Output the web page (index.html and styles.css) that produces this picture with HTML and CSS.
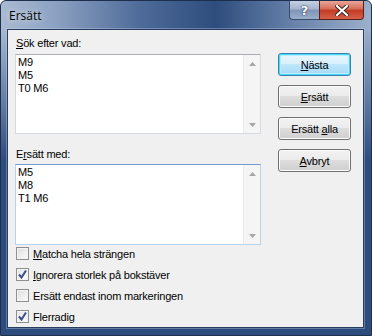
FILE: index.html
```html
<!DOCTYPE html>
<html lang="sv">
<head>
    <meta charset="UTF-8">
    <title>Ersätt</title>
    <link rel="stylesheet" href="styles.css">
</head>
<body>
    <div class="window">
        <div class="titlebar">
            <span class="title">Ersätt</span>
            <div class="caption-buttons">
                <div class="cap-btn help">?</div>
                <div class="cap-btn close">
                    <svg width="14" height="11" viewBox="0 0 14 11">
                        <path d="M2 1 L12 10 M12 1 L2 10" stroke="#3a2020" stroke-width="4" stroke-linecap="square"/>
                        <path d="M2 1 L12 10 M12 1 L2 10" stroke="#ffffff" stroke-width="2.2" stroke-linecap="square"/>
                    </svg>
                </div>
            </div>
        </div>

        <div class="client">
            <div class="fields">
                <div class="field-label"><u>S</u>ök efter vad:</div>
                <div class="textbox">
                    <div class="lines">M9<br>M5<br>T0 M6</div>
                    <div class="scrollbar">
                        <svg width="7" height="4" viewBox="0 0 7 4"><path d="M0 4 L3.5 0 L7 4 Z" fill="#a6a6a6"/></svg>
                        <svg width="7" height="4" viewBox="0 0 7 4"><path d="M0 0 L3.5 4 L7 0 Z" fill="#a6a6a6"/></svg>
                    </div>
                </div>

                <div class="field-label second">E<u>r</u>sätt med:</div>
                <div class="textbox focused">
                    <div class="lines">M5<br>M8<br>T1 M6</div>
                    <div class="scrollbar">
                        <svg width="7" height="4" viewBox="0 0 7 4"><path d="M0 4 L3.5 0 L7 4 Z" fill="#a6a6a6"/></svg>
                        <svg width="7" height="4" viewBox="0 0 7 4"><path d="M0 0 L3.5 4 L7 0 Z" fill="#a6a6a6"/></svg>
                    </div>
                </div>

                <div class="options">
                    <div class="option"><span class="checkbox"></span><span><u>M</u>atcha hela strängen</span></div>
                    <div class="option"><span class="checkbox checked"><svg width="11" height="11" viewBox="0 0 11 11"><path d="M2 5.5 L4.5 8.5 L9 1.5" stroke="#3b4f8f" stroke-width="2" fill="none"/></svg></span><span><u>I</u>gnorera storlek på bokstäver</span></div>
                    <div class="option"><span class="checkbox"></span><span>Ersätt endast inom markeringen</span></div>
                    <div class="option"><span class="checkbox checked"><svg width="11" height="11" viewBox="0 0 11 11"><path d="M2 5.5 L4.5 8.5 L9 1.5" stroke="#3b4f8f" stroke-width="2" fill="none"/></svg></span><span>Flerradig</span></div>
                </div>
            </div>

            <div class="actions">
                <button class="btn default"><u>N</u>ästa</button>
                <button class="btn"><u>E</u>rsätt</button>
                <button class="btn">Ersätt <u>a</u>lla</button>
                <button class="btn"><u>A</u>vbryt</button>
            </div>
        </div>
    </div>
</body>
</html>
```

FILE: styles.css
```css
body {
    margin: 0;
    padding: 0;
    background: #ffffff;
    font-family: "Liberation Sans", Arial, sans-serif;
    font-size: 11px;
    letter-spacing: -0.2px;
    color: #000;
}
.window {
    width: 372px;
    height: 336px;
    box-sizing: border-box;
    border: 1px solid #1e2f4d;
    border-radius: 6px 6px 0 0;
    background:
        linear-gradient(to bottom, rgba(45, 76, 126, 0) 28px, #2d4c7e 160px),
        linear-gradient(to right, #a9bad2 0%, #8ea3c3 14%, #4d6a98 38%, #2e4c7d 58%, #6a84ac 80%, #9cb0cb 100%);
    padding: 0 7px 7px 6px;
    display: flex;
    flex-direction: column;
}
.titlebar {
    height: 28px;
    display: flex;
    align-items: flex-start;
    flex-shrink: 0;
}
.title {
    font-family: "Open Sans", "Liberation Sans", sans-serif;
    font-size: 12px;
    letter-spacing: 0;
    color: #000;
    margin: 6px 0 0 2px;
    text-shadow: 0 0 6px rgba(255, 255, 255, 0.8);
}
.caption-buttons {
    margin-left: auto;
    margin-right: 0;
    display: flex;
}
.cap-btn {
    height: 19px;
    box-sizing: border-box;
    border: 1px solid #3b4a66;
    border-top: none;
    display: flex;
    align-items: center;
    justify-content: center;
}
.help {
    width: 30px;
    border-radius: 0 0 0 4px;
    border-right: none;
    background: linear-gradient(to bottom, #c4d0e2 0%, #a5b5cf 45%, #7f94b6 50%, #9aafcc 100%);
    color: #fff;
    font-family: "DejaVu Sans", sans-serif;
    font-weight: bold;
    font-size: 13px;
    text-shadow: 0 0 2px #2a3550, 0 0 1px #2a3550;
}
.close {
    width: 45px;
    border-radius: 0 0 4px 0;
    border-color: #5a1f18;
    background: linear-gradient(to bottom, #e8a597 0%, #d66c57 45%, #c33a22 50%, #d5614b 100%);
}
.client {
    flex: 1;
    display: flex;
    background: #f0f0f0;
    border: 1px solid #2a3d60;
    box-shadow: 0 0 0 1px rgba(200, 215, 235, 0.35);
    padding: 7px 0 0 7px;
}
.fields {
    width: 246px;
    display: flex;
    flex-direction: column;
}
.field-label {
    line-height: 13px;
    padding-left: 1px;
    margin-bottom: 4px;
}
.field-label.second {
    margin-top: 14px;
    margin-bottom: 3px;
}
.textbox {
    height: 80px;
    box-sizing: border-box;
    display: flex;
    background: #fff;
    border: 1px solid #d5d9e0;
    border-top-color: #abadb3;
}
.textbox.focused {
    height: 81px;
    border-color: #b7d3ee;
    border-top-color: #6d9bd0;
}
.lines {
    flex: 1;
    padding: 1px 2px;
    line-height: 13px;
}
.scrollbar {
    width: 16px;
    background: #f5f5f5;
    border-left: 1px solid #ebebeb;
    display: flex;
    flex-direction: column;
    align-items: center;
    justify-content: space-between;
    padding: 7px 0 6px;
}
.options {
    margin-top: -2px;
    display: flex;
    flex-direction: column;
}
.option {
    height: 21px;
    display: flex;
    align-items: center;
    padding-left: 1px;
}
.checkbox {
    width: 13px;
    height: 13px;
    box-sizing: border-box;
    border: 1px solid #8e8f8f;
    background: linear-gradient(135deg, #dcdcdc 0%, #f0f0f0 60%, #fbfbfb 100%);
    box-shadow: inset 0 0 0 1px #f4f4f4;
    margin-right: 4px;
    display: flex;
    align-items: center;
    justify-content: center;
}
.checkbox.checked {
    background: linear-gradient(135deg, #e2e2e2 0%, #f4f4f4 60%, #fdfdfd 100%);
}
.actions {
    margin-left: 17px;
    padding-top: 16px;
    display: flex;
    flex-direction: column;
    gap: 9px;
}
.btn {
    width: 73px;
    height: 23px;
    padding: 0;
    font-family: "Liberation Sans", Arial, sans-serif;
    font-size: 11px;
    letter-spacing: -0.2px;
    color: #000;
    border: 1px solid #707070;
    border-radius: 3px;
    background: linear-gradient(to bottom, #f2f2f2 0%, #ebebeb 49%, #dddddd 50%, #cfcfcf 100%);
    box-shadow: inset 0 0 0 1px #fcfcfc;
}
.btn.default {
    border-color: #3c7fb1;
    background: linear-gradient(to bottom, #eaf6fd 0%, #d9f0fc 49%, #bee6fd 50%, #a7d9f5 100%);
    box-shadow: inset 0 0 0 1px #48d8fb, inset 0 0 0 2px #b9ecfd;
}
```
